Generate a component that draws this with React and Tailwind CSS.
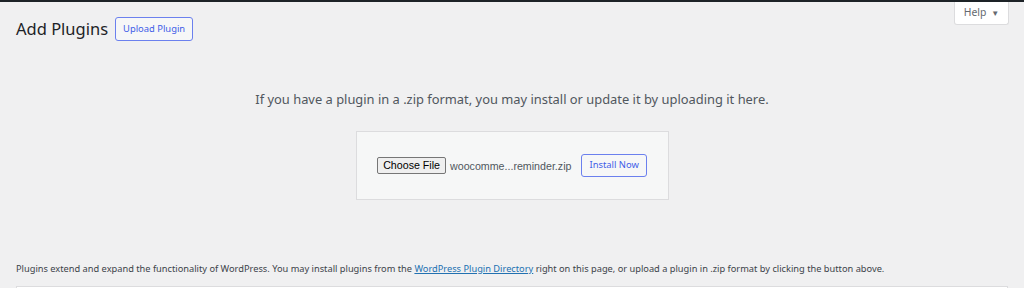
import React from 'react';

const Help = () => (
  <div className="absolute top-[2px] right-[15px] w-[55px] h-[23px] bg-white border border-t-0 border-[#dcdcde] rounded-b-[3px] flex items-center justify-center gap-[5px] text-[10.4px] text-[#646970]">
    <span>Help</span>
    <span className="text-[8px] leading-none">▼</span>
  </div>
);

export default function App() {
  return (
    <div
      className="relative w-[1024px] h-[288px] overflow-hidden bg-[#f0f0f1] text-[#3c434a]"
      style={{ fontFamily: "'Noto Sans', 'Open Sans', sans-serif" }}
    >
      <div className="h-[2px] bg-[#1d2327]" />
      <Help />

      {/* Header */}
      <div className="flex items-center gap-[7px] pl-[16px] pt-[15px]">
        <h1 className="text-[16.5px] leading-[24px] text-[#1d2327] font-normal">Add Plugins</h1>
        <button className="h-[24px] px-[7px] rounded-[3px] border border-[#6b80ee] bg-[#f6f7f7] text-[9.4px] text-[#3f5ee8]">
          Upload Plugin
        </button>
      </div>

      {/* Upload form */}
      <div className="flex flex-col items-center pt-[48px]">
        <p className="text-[12.9px] leading-[20px] text-[#50575e]">
          If you have a plugin in a .zip format, you may install or update it by uploading it here.
        </p>
        <div className="mt-[22px] w-[313px] h-[69px] border border-[#dcdcde] bg-[#f6f7f7] flex items-center justify-center">
          <div className="flex items-center" style={{ fontFamily: "'Liberation Sans', Arial, sans-serif" }}>
            <button className="h-[17px] px-[5px] rounded-[2px] border border-[#767676] bg-[#efefef] text-[10.67px] text-black leading-none">
              Choose File
            </button>
            <span className="ml-[4px] text-[10.67px] text-[#50575e]">woocomme...reminder.zip</span>
          </div>
          <button className="ml-[10px] h-[23px] px-[7px] rounded-[3px] border border-[#6b80ee] bg-[#f6f7f7] text-[9.4px] text-[#3f5ee8]">
            Install Now
          </button>
        </div>
      </div>

      {/* Footer note */}
      <p className="mt-[62px] pl-[16px] text-[9.25px] leading-[14px] text-[#3c434a]">
        Plugins extend and expand the functionality of WordPress. You may install plugins from the{' '}
        <a className="text-[#2271b1] underline">WordPress Plugin Directory</a> right on this page, or upload a plugin in .zip format by clicking the button above.
      </p>
      <div className="mt-[10px] mx-[16px] h-[40px] bg-white border border-[#dcdcde]" />
    </div>
  );
}
